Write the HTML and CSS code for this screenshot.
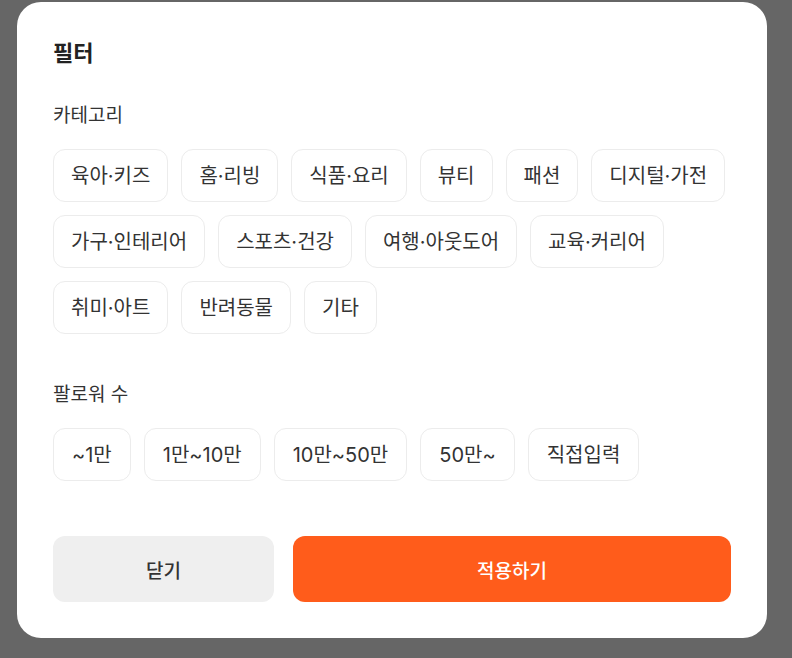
FILE: index.html
```html
<!DOCTYPE html>
<html lang="ko">
<head>
<meta charset="utf-8">
<title>필터</title>
<link rel="stylesheet" href="styles.css">
</head>
<body>
<div class="overlay">
  <div class="modal">
    <h2 class="title">필터</h2>
    <section class="section">
      <h3 class="label">카테고리</h3>
      <div class="chips">
        <button class="chip">육아·키즈</button>
        <button class="chip">홈·리빙</button>
        <button class="chip">식품·요리</button>
        <button class="chip">뷰티</button>
        <button class="chip">패션</button>
        <button class="chip">디지털·가전</button>
        <button class="chip">가구·인테리어</button>
        <button class="chip">스포츠·건강</button>
        <button class="chip">여행·아웃도어</button>
        <button class="chip">교육·커리어</button>
        <button class="chip">취미·아트</button>
        <button class="chip">반려동물</button>
        <button class="chip">기타</button>
      </div>
    </section>
    <section class="section section-followers">
      <h3 class="label">팔로워 수</h3>
      <div class="chips">
        <button class="chip chip-num">~1만</button>
        <button class="chip chip-num">1만~10만</button>
        <button class="chip chip-num">10만~50만</button>
        <button class="chip chip-num">50만~</button>
        <button class="chip chip-num">직접입력</button>
      </div>
    </section>
    <div class="actions">
      <button class="btn btn-close">닫기</button>
      <button class="btn btn-apply">적용하기</button>
    </div>
  </div>
</div>
</body>
</html>
```
FILE: styles.css
```css
* { box-sizing: border-box; }
html, body { margin: 0; padding: 0; }
body {
  background: #666666;
  font-family: Inter, "Noto Sans CJK KR", sans-serif;
  color: #333;
  width: 792px;
  height: 658px;
  overflow: hidden;
}
.overlay {
  padding: 2px 25px 0 17px;
}
.modal {
  width: 750px;
  background: #fff;
  border-radius: 24px;
  padding: 36px 36px 36px 36px;
}
.title {
  margin: 0;
  font-size: 22px;
  line-height: 30px;
  font-weight: 600;
  color: #222;
}
.section { margin-top: 36px; }
.section-followers { margin-top: 49px; }
.label {
  margin: 0;
  font-size: 19px;
  line-height: 24px;
  font-weight: 400;
  color: #333;
}
.chips {
  margin-top: 21px;
  display: flex;
  flex-wrap: wrap;
  gap: 13px 13px;
}
.chip {
  height: 53px;
  padding: 0 17px;
  border: 1px solid #ececec;
  border-radius: 12px;
  background: #fff;
  font-family: inherit;
  font-size: 20px;
  color: #333;
  line-height: 1;
}
.chip-num {
  padding: 0 18px;
}
.actions {
  margin-top: 55px;
  display: flex;
  gap: 19px;
}
.btn {
  height: 66px;
  border: 0;
  border-radius: 12px;
  font-family: inherit;
  font-size: 19px;
  font-weight: 500;
}
.btn-close {
  width: 221px;
  background: #efefef;
  color: #333;
}
.btn-apply {
  flex: 1;
  background: #ff5c1b;
  color: #fff;
}
```
